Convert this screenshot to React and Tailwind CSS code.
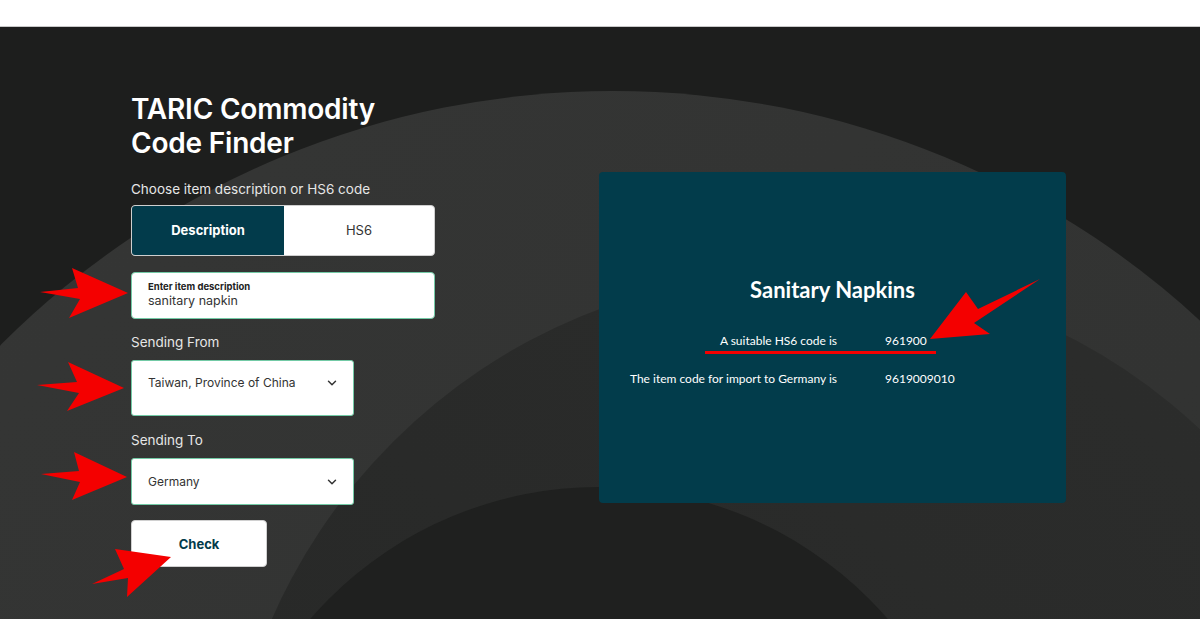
import { ChevronDown } from 'lucide-react';

function Backdrop() {
  return (
    <svg className="absolute inset-0" width="1200" height="592" viewBox="0 0 1200 592">
      <defs>
        <linearGradient id="band1" x1="0" y1="0" x2="1" y2="1">
          <stop offset="0" stopColor="#353635" />
          <stop offset="1" stopColor="#2f302f" />
        </linearGradient>
        <linearGradient id="band2" x1="1" y1="0" x2="0" y2="1">
          <stop offset="0" stopColor="#2c2d2c" />
          <stop offset="1" stopColor="#262726" />
        </linearGradient>
      </defs>
      <rect width="1200" height="592" fill="#1d1e1d" />
      <circle cx="613" cy="929" r="865" fill="url(#band1)" />
      <circle cx="803" cy="825" r="580" fill="url(#band2)" />
      <circle cx="599" cy="842" r="382" fill="#1f201f" />
    </svg>
  );
}

function Marks() {
  return (
    <svg className="absolute inset-0 pointer-events-none" width="1200" height="619" viewBox="0 0 1200 619">
      <g fill="#f40000">
        <polygon points="40,292 78,288 72,268 128,293 69,318 80,299" />
        <polygon points="37,385 77,382 68,362 124,388 67,411 79,393" />
        <polygon points="41,474 79,471 74,452 127,477 72,500 80,482" />
        <polygon points="92,584 124,569 115,549 171,557 127,597 128,578" />
        <polygon points="930,339 966,292 978,309 1040,279 974,323 990,334" />
      </g>
      <rect x="705" y="351" width="231" height="3" fill="#f40000" />
    </svg>
  );
}

export default function App() {
  return (
    <div className="relative w-[1200px] h-[619px] overflow-hidden font-['Inter',sans-serif]">
      <div className="h-[27px] bg-white border-b border-[#c8c8c8]" />
      <div className="relative h-[592px]">
        <Backdrop />
        <div className="relative flex items-start pl-[131px] pt-[65px]">
          <div className="w-[304px] flex flex-col">
            <h1 className="text-white text-[28px] leading-[34px] font-semibold tracking-[-0.2px]">
              TARIC Commodity
              <br />
              Code Finder
            </h1>
            <p className="mt-[19px] text-[13.5px] leading-5 text-[#e6e6e6]">
              Choose item description or HS6 code
            </p>
            <div className="mt-[6px] h-[51px] flex rounded-[4px] overflow-hidden border border-[#cfcfcf] bg-white">
              <div className="w-[152px] bg-[#023b4b] flex items-center justify-center text-white text-[13px] font-bold">
                Description
              </div>
              <div className="flex-1 flex items-center justify-center text-[13px] text-[#333]">
                HS6
              </div>
            </div>
            <div className="mt-4 h-[47px] bg-white rounded-[4px] border-[1.5px] border-[#73caa6] pl-[16px] pt-[7px] flex flex-col">
              <span className="text-[9.5px] leading-[13px] font-bold text-[#222]">Enter item description</span>
              <span className="text-[12.5px] leading-4 text-[#333]">sanitary napkin</span>
            </div>
            <p className="mt-[13px] text-[13.5px] leading-5 text-[#e6e6e6]">Sending From</p>
            <div className="mt-2 w-[223px] h-[56px] bg-white rounded-[3px] border-[1.5px] border-[#73caa6] flex items-start justify-between pl-[16px] pr-[14px] pt-[14px]">
              <span className="text-[12px] leading-4 text-[#333]">Taiwan, Province of China</span>
              <ChevronDown size={14} strokeWidth={2.5} className="text-[#333] mt-[1px]" />
            </div>
            <p className="mt-[14px] text-[13.5px] leading-5 text-[#e6e6e6]">Sending To</p>
            <div className="mt-2 w-[223px] h-[47px] bg-white rounded-[3px] border-[1.5px] border-[#73caa6] flex items-center justify-between pl-[16px] pr-[14px]">
              <span className="text-[12px] leading-4 text-[#333]">Germany</span>
              <ChevronDown size={14} strokeWidth={2.5} className="text-[#333]" />
            </div>
            <button className="mt-[15px] w-[136px] h-[47px] pt-[3px] bg-white rounded-[4px] border border-[#d0d0d0] text-[13px] font-bold text-[#023b4b]">
              Check
            </button>
          </div>
          <div className="ml-[164px] mt-[80px] w-[467px] h-[331px] bg-[#023c4b] rounded-[4px] flex flex-col items-center pt-[105px] font-['Lato',sans-serif] text-white">
            <h2 className="text-[22px] leading-[26px] font-bold">Sanitary Napkins</h2>
            <div className="mt-[30px] w-full grid grid-cols-[238px_1fr] gap-x-[48px] gap-y-[22px] text-[12px] leading-4">
              <span className="text-right">A suitable HS6 code is</span>
              <span>961900</span>
              <span className="text-right">The item code for import to Germany is</span>
              <span>9619009010</span>
            </div>
          </div>
        </div>
      </div>
      <Marks />
    </div>
  );
}
